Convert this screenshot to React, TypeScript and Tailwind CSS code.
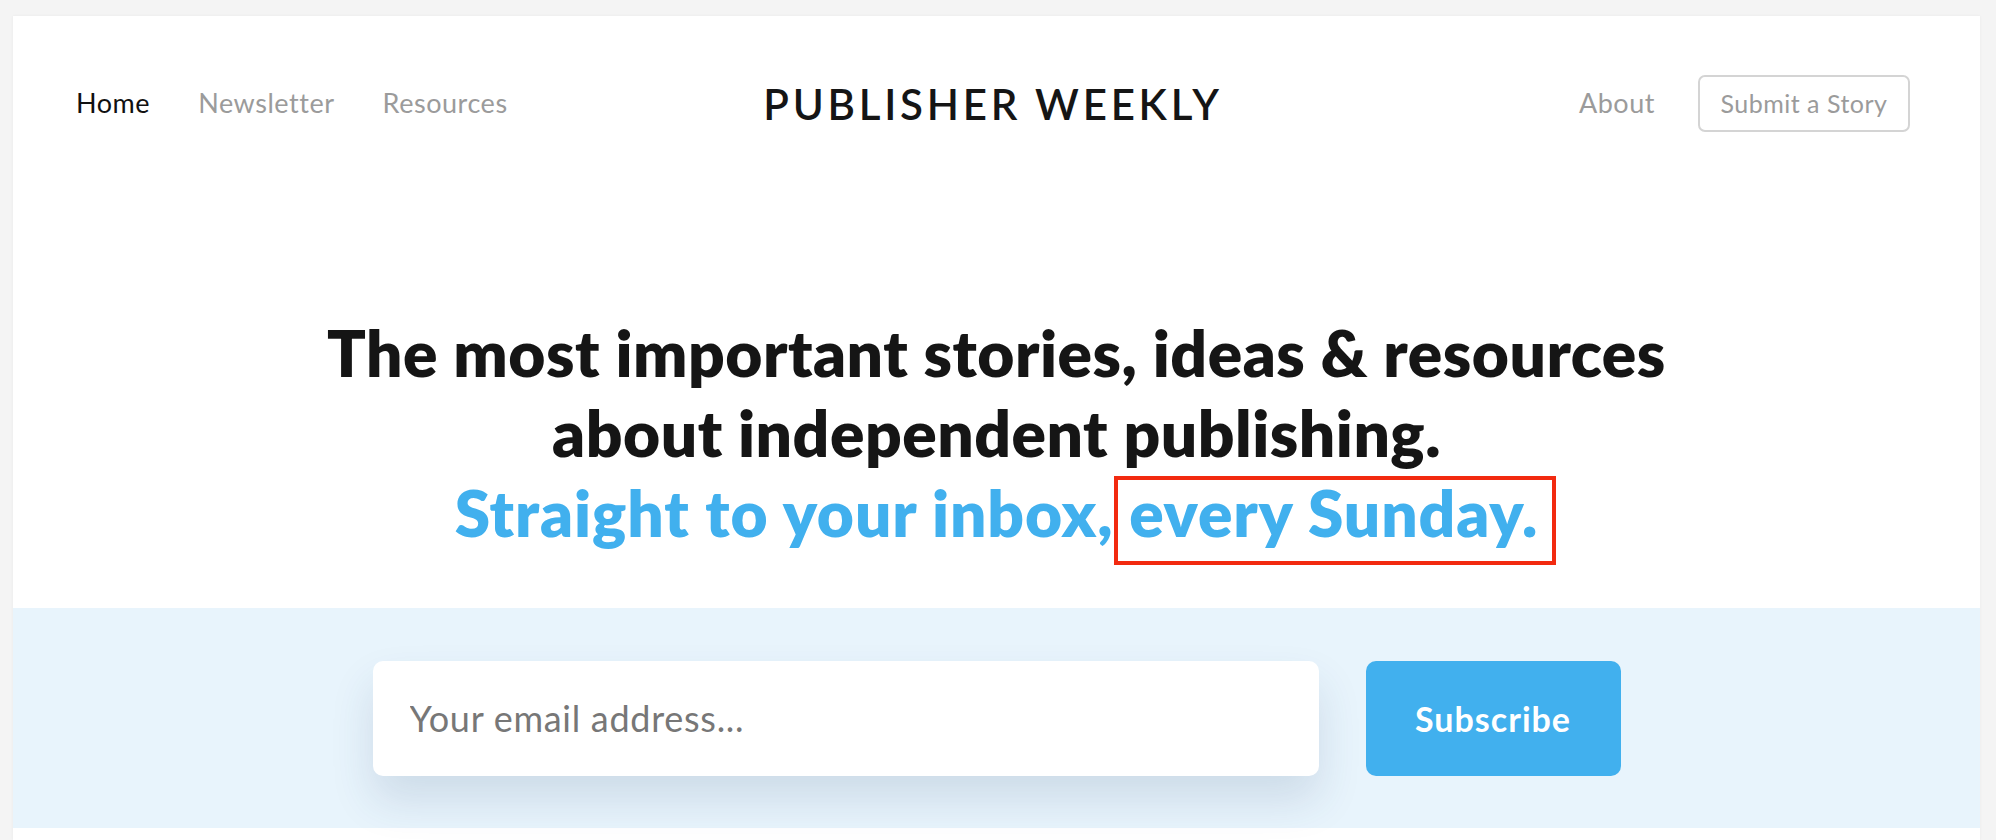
export default function App() {
  return (
    <div className="min-h-screen bg-[#f4f4f4] pt-4 pl-[13px] pr-4 font-['Lato',sans-serif]">
      <div className="bg-white shadow-[0_0_3px_rgba(0,0,0,0.05)] pb-[12px]">
        <header className="grid grid-cols-3 items-center pl-[63px] pr-[70px] pt-[59px]">
          <nav className="flex items-center gap-[48px] text-[27px] tracking-[0.02em]">
            <a className="text-[#111111]">Home</a>
            <a className="text-[#9b9b9b]">Newsletter</a>
            <a className="text-[#9b9b9b]">Resources</a>
          </nav>
          <div className="flex justify-center">
            <span className="text-[42px] font-semibold tracking-[0.09em] text-[#151515] leading-none">
              PUBLISHER WEEKLY
            </span>
          </div>
          <div className="flex items-center justify-end gap-[43px]">
            <a className="text-[27px] tracking-[0.02em] text-[#9b9b9b]">About</a>
            <button className="h-[57px] w-[212px] rounded-[7px] border-2 border-[#d4d4d4] text-[25px] tracking-[0.02em] text-[#9b9b9b]">
              Submit a Story
            </button>
          </div>
        </header>

        <h1 className="mt-[181px] text-center text-[64px] leading-[80px] font-extrabold tracking-[0.008em] text-[#151515]">
          The most important stories, ideas &amp; resources
          <br />
          about independent publishing.
          <br />
          <span className="text-[#41b0ee] tracking-[0.014em]">
            Straight to your inbox,{" "}
            <span className="relative">
              every Sunday.
              <span className="absolute -left-[15px] -right-[18px] top-[2px] -bottom-[14px] border-4 border-[#f22a10]" />
            </span>
          </span>
        </h1>

        <section className="mt-[55px] flex h-[220px] items-center justify-center gap-[47px] bg-[#e8f4fc]">
          <input
            type="email"
            placeholder="Your email address..."
            className="h-[115px] w-[946px] rounded-[10px] bg-white px-[37px] text-[36px] tracking-[0.02em] text-[#333] outline-none placeholder:text-[#777777] shadow-[0_24px_44px_rgba(40,70,110,0.14)]"
          />
          <button className="h-[115px] w-[255px] rounded-[10px] bg-[#41b0ee] text-[34px] font-bold tracking-[0.03em] text-white">
            Subscribe
          </button>
        </section>
      </div>
    </div>
  );
}
